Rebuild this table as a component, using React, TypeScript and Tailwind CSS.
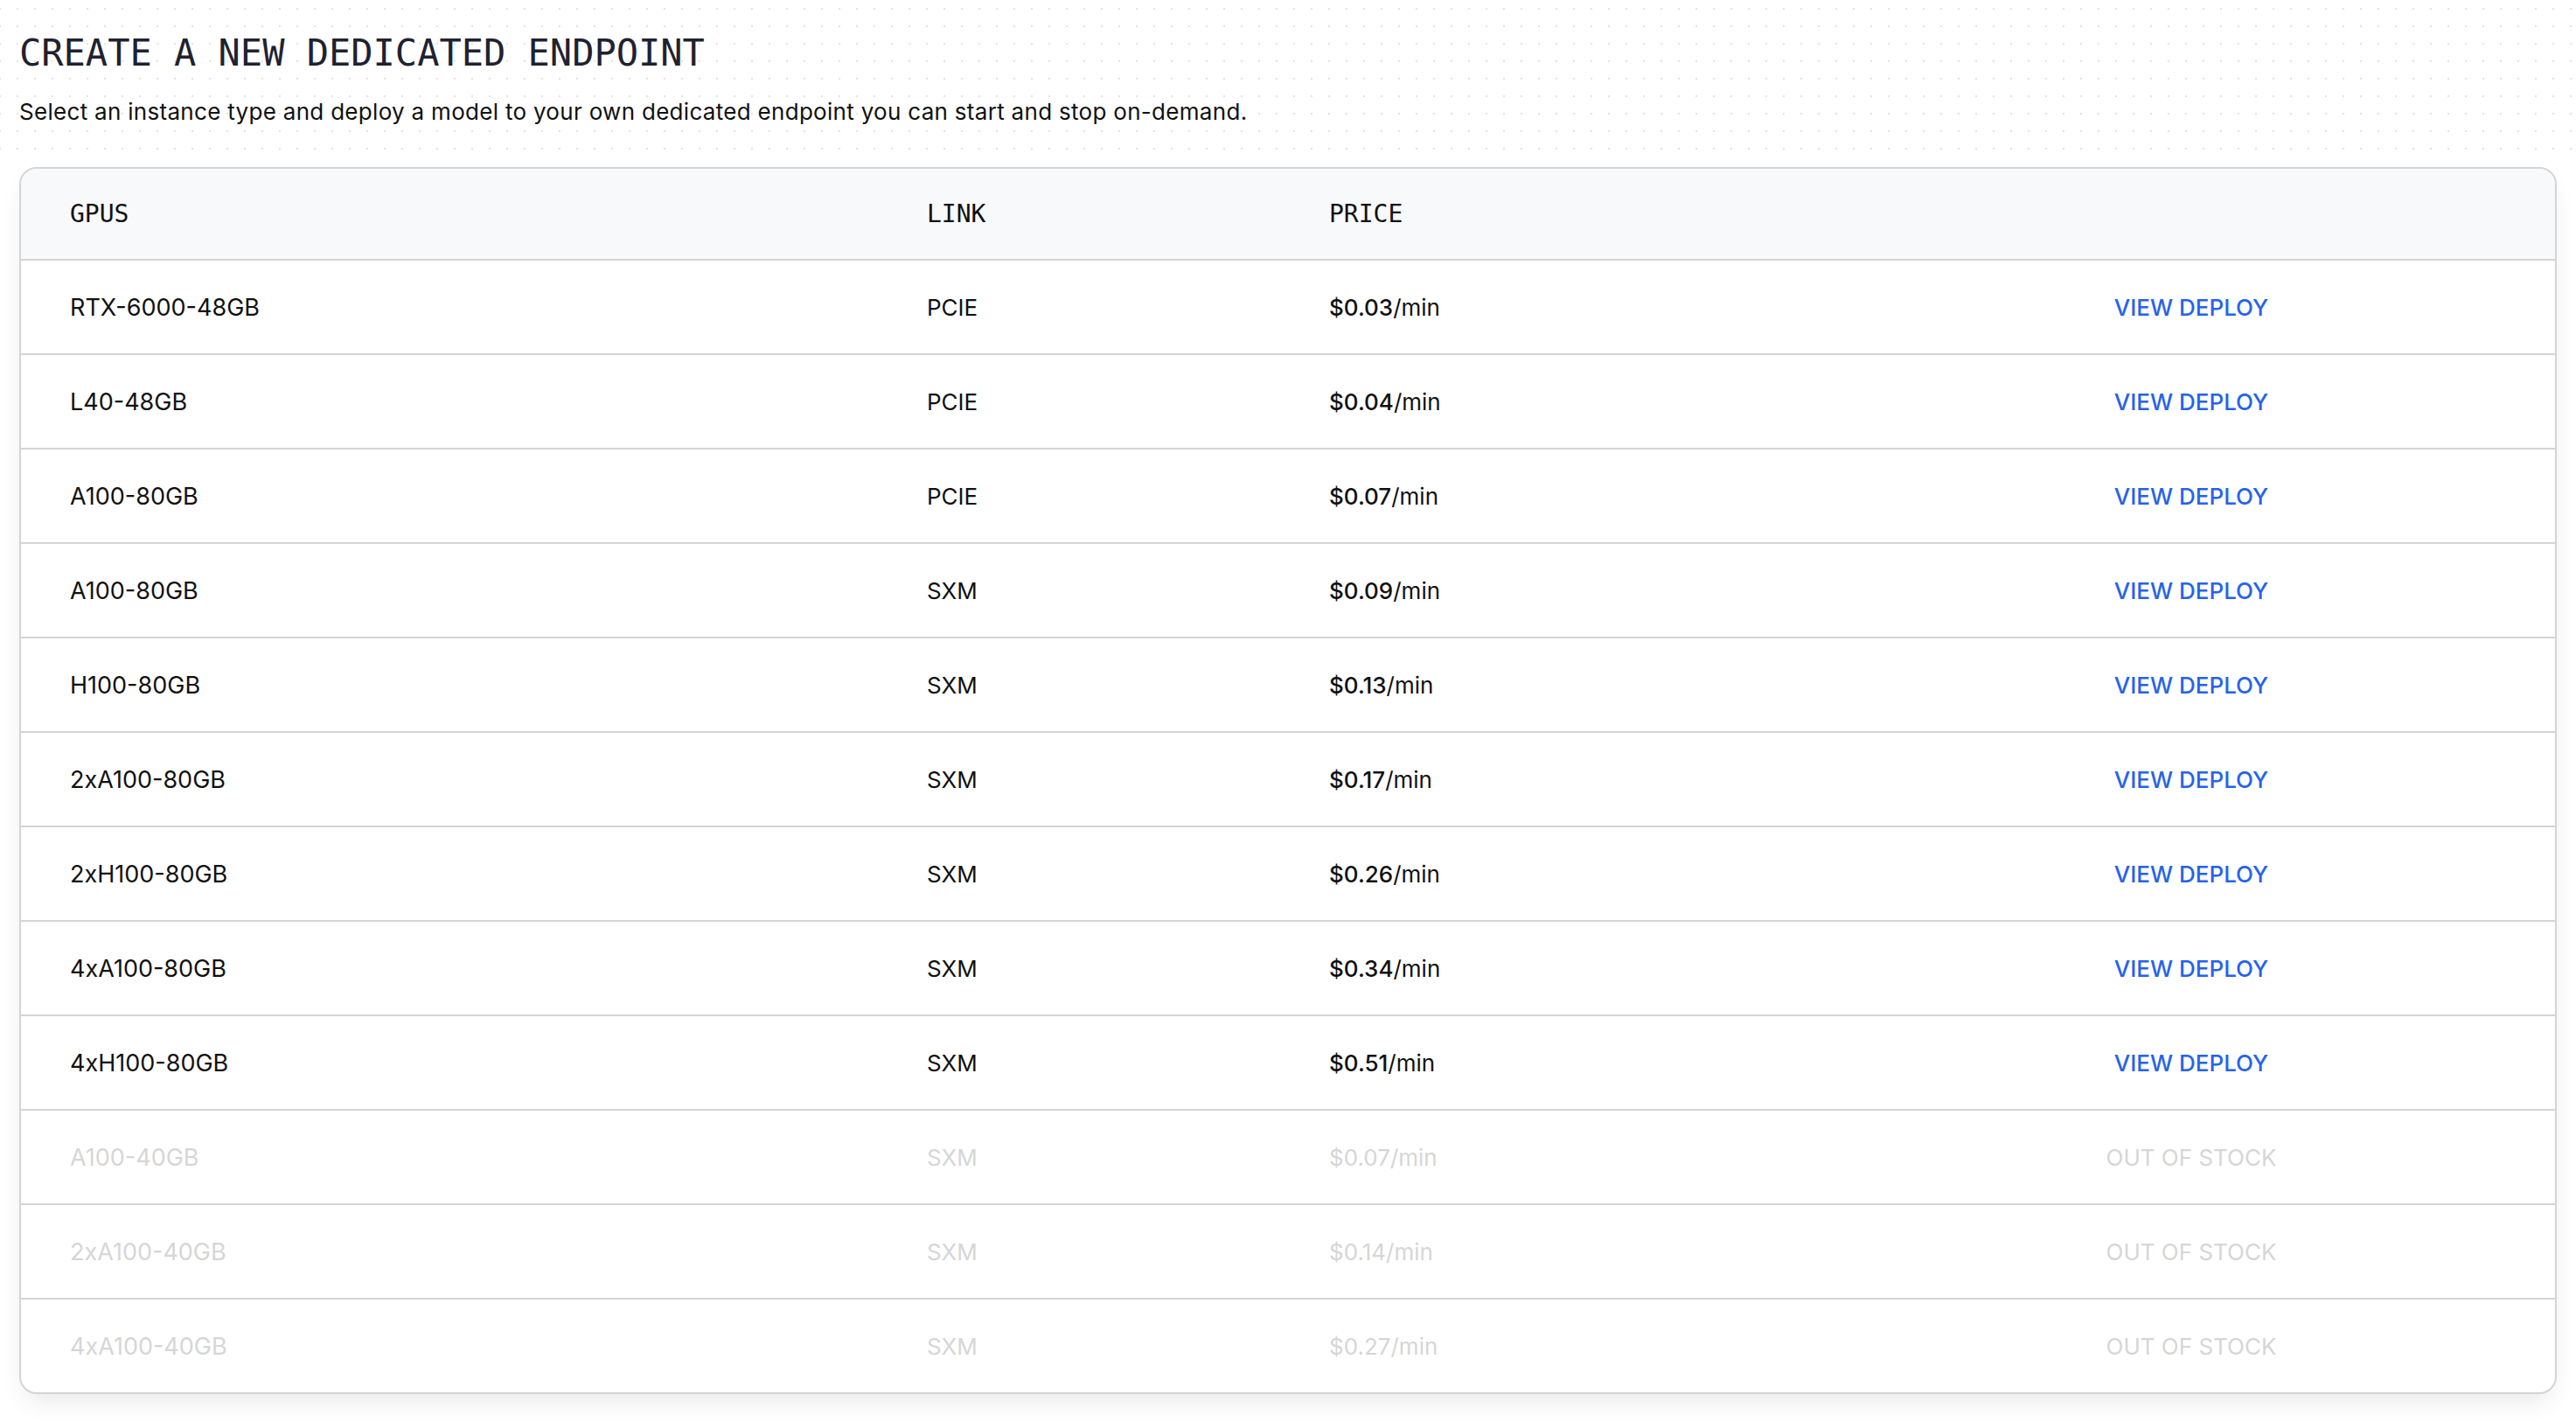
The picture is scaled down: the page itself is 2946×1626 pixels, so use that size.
import React from "react";

type Row = { gpu: string; link: string; price: string; available: boolean };

const rows: Row[] = [
  { gpu: "RTX-6000-48GB", link: "PCIE", price: "$0.03", available: true },
  { gpu: "L40-48GB", link: "PCIE", price: "$0.04", available: true },
  { gpu: "A100-80GB", link: "PCIE", price: "$0.07", available: true },
  { gpu: "A100-80GB", link: "SXM", price: "$0.09", available: true },
  { gpu: "H100-80GB", link: "SXM", price: "$0.13", available: true },
  { gpu: "2xA100-80GB", link: "SXM", price: "$0.17", available: true },
  { gpu: "2xH100-80GB", link: "SXM", price: "$0.26", available: true },
  { gpu: "4xA100-80GB", link: "SXM", price: "$0.34", available: true },
  { gpu: "4xH100-80GB", link: "SXM", price: "$0.51", available: true },
  { gpu: "A100-40GB", link: "SXM", price: "$0.07", available: false },
  { gpu: "2xA100-40GB", link: "SXM", price: "$0.14", available: false },
  { gpu: "4xA100-40GB", link: "SXM", price: "$0.27", available: false },
];

const mono = "font-['DejaVu_Sans_Mono','Liberation_Mono',monospace]";
const sans = "font-['Inter','Liberation_Sans',sans-serif]";

export default function App() {
  return (
    <div className="min-h-screen w-full bg-white">
      <div className="h-[181px] px-[22px] pt-[37px] bg-[radial-gradient(circle,#e4e4e4_1.1px,transparent_1.6px)] bg-[size:20px_20px] bg-[position:-10px_0px]">
        <h1 className={`${mono} text-[42px] leading-[48px] text-[#1f2230]`}>
          CREATE A NEW DEDICATED ENDPOINT
        </h1>
        <p className={`${sans} mt-[28px] text-[26px] leading-[30px] tracking-[0.3px] text-[#111111]`}>
          Select an instance type and deploy a model to your own dedicated endpoint you can start and stop on-demand.
        </p>
      </div>
      <div className="px-[22px] mt-[10px]">
        <div className="rounded-[20px] border-2 border-[#d4d4d4] bg-white overflow-hidden shadow-[0_14px_30px_-8px_rgba(0,0,0,0.10)]">
          <div className="grid grid-cols-[980px_460px_626px_1fr] h-[103px] items-center bg-[#f8f9fb]">
            <div className={`${mono} pl-[56px] text-[28px] text-[#111111]`}>GPUS</div>
            <div className={`${mono} pl-[56px] text-[28px] text-[#111111]`}>LINK</div>
            <div className={`${mono} pl-[56px] text-[28px] text-[#111111]`}>PRICE</div>
            <div />
          </div>
          {rows.map((r, i) => (
            <div
              key={i}
              className={`grid grid-cols-[980px_460px_626px_1fr] h-[108px] items-center border-t-2 border-[#d4d4d4] ${sans} text-[26px] ${
                r.available ? "text-[#111111]" : "text-[#d6d6d6]"
              }`}
            >
              <div className="pl-[56px] pt-[2px] text-[27px]">{r.gpu}</div>
              <div className="pl-[56px]">{r.link}</div>
              <div className="pl-[56px]">
                <span className={r.available ? "font-medium" : ""}>{r.price}</span>
                <span>/min</span>
              </div>
              <div className="flex justify-center">
                {r.available ? (
                  <span className="font-medium text-[#2563eb]">VIEW DEPLOY</span>
                ) : (
                  <span>OUT OF STOCK</span>
                )}
              </div>
            </div>
          ))}
        </div>
      </div>
    </div>
  );
}
